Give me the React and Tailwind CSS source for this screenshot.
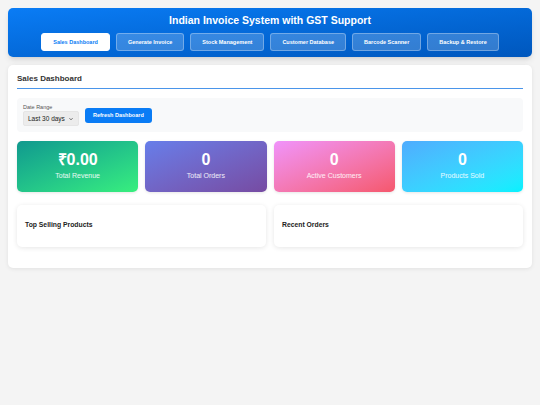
const tabs = [
  "Sales Dashboard",
  "Generate Invoice",
  "Stock Management",
  "Customer Database",
  "Barcode Scanner",
  "Backup & Restore",
];

const stats = [
  { value: "₹0.00", label: "Total Revenue", bg: "bg-gradient-to-br from-[#11998e] to-[#38ef7d]" },
  { value: "0", label: "Total Orders", bg: "bg-gradient-to-br from-[#667eea] to-[#764ba2]" },
  { value: "0", label: "Active Customers", bg: "bg-gradient-to-br from-[#f093fb] to-[#f5576c]" },
  { value: "0", label: "Products Sold", bg: "bg-gradient-to-br from-[#4facfe] to-[#00f2fe]" },
];

export default function App() {
  return (
    <div
      className="min-h-[405px] bg-[#f4f4f4] px-2 pt-2 pb-4"
      style={{ fontFamily: '"Liberation Sans", Arial, sans-serif' }}
    >
      {/* header */}
      <div className="rounded-[5px] bg-gradient-to-br from-[#0a7cf5] to-[#0057bd] pt-[6px] pb-[6px] shadow-md">
        <h1 className="text-center text-[10.5px] leading-[13px] font-bold text-white">
          Indian Invoice System with GST Support
        </h1>
        <div className="mt-[6px] flex justify-center gap-[6px]">
          {tabs.map((t, i) => (
            <button
              key={t}
              className={
                i === 0
                  ? "h-[18px] rounded-[3px] border border-white bg-white px-[11px] text-[5.5px] font-bold text-[#0a7cf5]"
                  : "h-[18px] rounded-[3px] border border-white/30 bg-white/20 px-[11px] text-[5.5px] font-bold text-white"
              }
            >
              {t}
            </button>
          ))}
        </div>
      </div>

      {/* main card */}
      <div className="mt-2 rounded-[5px] bg-white px-[9px] pt-[9px] pb-[21px] shadow-[0_1px_4px_rgba(0,0,0,0.08)]">
        <h2 className="border-b border-solid border-[#4a95ea] pb-[4px] text-[8px] leading-[10px] font-bold text-[#333]">
          Sales Dashboard
        </h2>

        <div className="mt-[9px] flex items-center gap-[6px] rounded-[4px] bg-[#f8f9fa] px-[6px] py-[6px]">
          <div className="flex flex-col">
            <label className="text-[5.5px] leading-[6px] text-[#555]">Date Range</label>
            <div className="mt-[1px] flex h-[15px] w-[56px] items-center justify-between rounded-[2px] border border-[#e5e5e5] bg-[#ececec] px-[4px] text-[6.5px] text-[#222]">
              <span>Last 30 days</span>
              <svg width="6" height="6" viewBox="0 0 24 24" fill="none" stroke="#333" strokeWidth="3">
                <polyline points="6 9 12 15 18 9" />
              </svg>
            </div>
          </div>
          <button className="h-[15px] rounded-[3px] bg-[#0a7cf5] px-[8px] text-[5.5px] font-bold text-white">
            Refresh Dashboard
          </button>
        </div>

        <div className="mt-[9px] grid grid-cols-4 gap-[7px]">
          {stats.map((s) => (
            <div
              key={s.label}
              className={`flex h-[51px] flex-col items-center justify-center rounded-[5px] pb-[4px] text-white shadow-[0_1px_3px_rgba(0,0,0,0.1)] ${s.bg}`}
            >
              <div className="text-[16px] leading-[19px] font-bold">{s.value}</div>
              <div className="mt-[2px] text-[7px] leading-[9px] text-white/90">{s.label}</div>
            </div>
          ))}
        </div>

        <div className="mt-[13px] grid grid-cols-2 gap-[8px]">
          {["Top Selling Products", "Recent Orders"].map((t) => (
            <div
              key={t}
              className="flex h-[42px] items-center rounded-[5px] bg-white px-[8px] pb-[1px] shadow-[0_1px_5px_rgba(0,0,0,0.1)]"
            >
              <h3 className="text-[6.8px] font-bold text-[#222]">{t}</h3>
            </div>
          ))}
        </div>
      </div>
    </div>
  );
}
